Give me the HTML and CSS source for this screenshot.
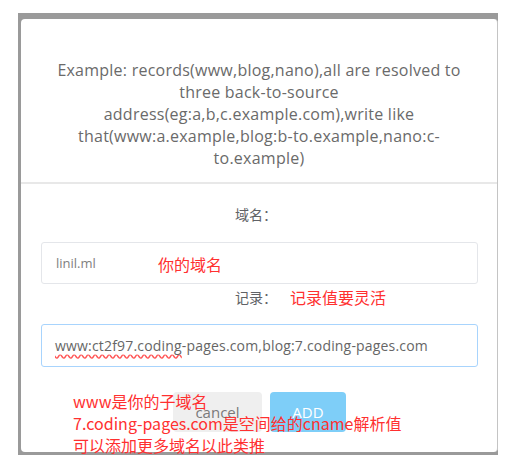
FILE: index.html
```html
<!DOCTYPE html>
<html lang="zh-CN">
<head>
<meta charset="utf-8">
<title>Add domain</title>
<link rel="stylesheet" href="styles.css">
</head>
<body>
<div class="frame">
  <div class="dialog">
    <p class="hint">Example: records(www,blog,nano),all are resolved to three back-to-source address(eg:a,b,c.example.com),write like that(www:a.example,blog:b-to.example,nano:c-to.example)</p>
    <div class="divider"></div>
    <form class="form">
      <div class="label">域名：</div>
      <div class="input">linil.ml</div>
      <div class="label label-record">记录：</div>
      <div class="input input-focus"><span class="misspelled">www:ct2f97.coding</span>-pages.com,blog:7.coding-pages.com</div>
      <div class="actions">
        <button type="button" class="btn btn-cancel">cancel</button>
        <button type="button" class="btn btn-add">ADD</button>
      </div>
    </form>
    <div class="note note-domain">你的域名</div>
    <div class="note note-record">记录值要灵活</div>
    <div class="note note-block">www是你的子域名<br>7.coding-pages.com是空间给的cname解析值<br>可以添加更多域名以此类推</div>
  </div>
</div>
</body>
</html>
```

FILE: styles.css
```css
body {
  margin: 0;
  background: #fff;
  font-family: "Open Sans", "Noto Sans CJK SC", sans-serif;
}

.frame {
  margin: 13px 0 0 18px;
  width: 480px;
  height: 442px;
  box-sizing: border-box;
  background: #9a9a9a;
  padding: 6px 0 3px 3px;
}

.dialog {
  position: relative;
  height: 100%;
  box-sizing: border-box;
  background: #fff;
  border-radius: 4px;
  border-right: 1px solid #c4c4c4;
}

.hint {
  margin: 0 auto;
  padding-top: 40px;
  width: 424px;
  text-align: center;
  font-size: 16px;
  line-height: 22px;
  letter-spacing: 0.24px;
  color: #6a6a6a;
}

.divider {
  margin-top: 13px;
  height: 2px;
  background: #e8e8e8;
}

.form {
  margin: 0;
  padding: 19px 19px 0 20px;
}

.label {
  margin-left: 194px;
  font-family: "Noto Sans CJK SC", sans-serif;
  font-size: 14px;
  line-height: 22px;
  color: #606266;
}

.input {
  margin-top: 17px;
  height: 42px;
  box-sizing: border-box;
  border: 1px solid #e4e6ea;
  border-radius: 3px;
  padding: 0 14px;
  display: flex;
  align-items: center;
  font-size: 13px;
  color: #808080;
}

.label-record {
  margin-top: 2px;
}

.input-focus {
  margin-top: 16px;
  height: 43px;
  padding-left: 13px;
  border-color: #a8d4fd;
  font-size: 14px;
  letter-spacing: 0.18px;
  color: #666;
  white-space: pre;
}

.misspelled {
  text-decoration: underline wavy #f55;
  text-underline-offset: 3px;
}

.actions {
  margin-top: 25px;
  display: flex;
  justify-content: center;
  gap: 8px;
}

.btn {
  height: 40px;
  border: none;
  border-radius: 4px;
  font-family: "Open Sans", sans-serif;
  font-size: 15px;
  padding: 0;
}

.btn-cancel {
  width: 89px;
  background: #efefef;
  color: #7a7a7a;
}

.btn-add {
  width: 76px;
  background: #7ecef8;
  color: #fff;
}

.note {
  position: absolute;
  color: #ff3030;
  font-family: "Noto Sans CJK SC", sans-serif;
  font-size: 16px;
  line-height: 16px;
  white-space: nowrap;
}

.note-domain {
  left: 137px;
  top: 237px;
}

.note-record {
  left: 269px;
  top: 270px;
}

.note-block {
  left: 52px;
  top: 371px;
  line-height: 22px;
}
```
